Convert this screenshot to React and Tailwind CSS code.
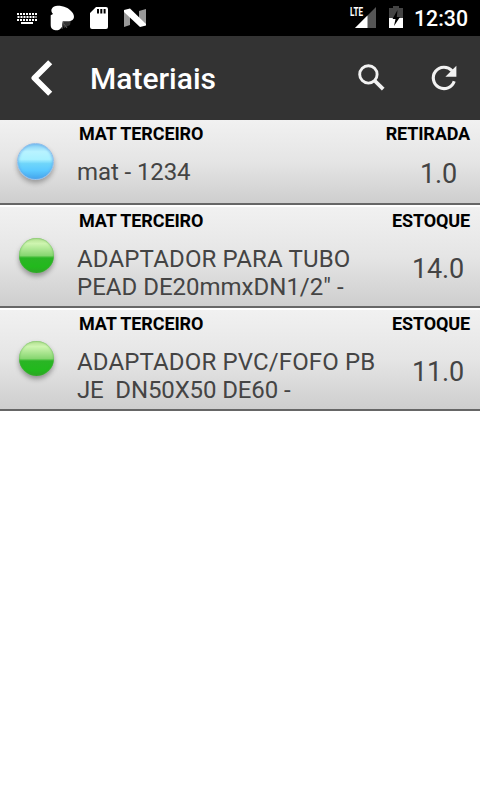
const materials = [
  {
    id: 1,
    owner: "MAT TERCEIRO",
    status: "RETIRADA",
    lines: [{ text: "mat - 1234", tracking: "tracking-[-0.1px]" }],
    amount: "1.0",
  },
  {
    id: 2,
    owner: "MAT TERCEIRO",
    status: "ESTOQUE",
    lines: [
      { text: "ADAPTADOR PARA TUBO", tracking: "tracking-[0.16px]" },
      { text: "PEAD DE20mmxDN1/2\" -", tracking: "tracking-normal" },
    ],
    amount: "14.0",
  },
  {
    id: 3,
    owner: "MAT TERCEIRO",
    status: "ESTOQUE",
    lines: [
      { text: "ADAPTADOR PVC/FOFO PB", tracking: "tracking-[0.14px]" },
      { text: "JE  DN50X50 DE60 -", tracking: "tracking-[-0.12px]" },
    ],
    amount: "11.0",
  },
];

function StatusBar() {
  return (
    <div className="flex h-9 items-center justify-between bg-black pl-4 pr-3">
      <svg width="136" height="36" viewBox="16 0 136 36" fill="#fff">
        <path d="M17 14H37" stroke="#fff" strokeWidth="2" strokeDasharray="2 1" />
        <path d="M17.500 17H36.500" stroke="#fff" strokeWidth="2" strokeDasharray="2 1" />
        <path d="M17 20H37" stroke="#fff" strokeWidth="2" strokeDasharray="2 1" />
        <path d="M21 22h12v2H21z" />
        <path d="M62 21l9-1-1 5-6 3z" fill="#333" />
        <path d="M50.700 15.300L53 14C51 12 51 9.500 52 8.500C53 6.500 55 5.700 57.500 5.700C64 5.700 69 8 72 12C74 14.500 74.500 17 73.500 18.800C72.500 20.700 70 21.300 67 21.300H62.700L62 27C60.500 28.500 60 30 57.700 30.300C56 30.500 54 30.300 52.700 29.300C50.700 28 50.700 26 50.700 24z" />
        <path d="M63.500 22l-1.500 7M64 24l3 4" stroke="#555" strokeWidth="1" />
        <path fillRule="evenodd" d="M96 7h10a2 2 0 0 1 2 2v18a2 2 0 0 1-2 2H92a2 2 0 0 1-2-2V13zM97 9v4.500h2V9zM100.300 9v4.500h2V9zM103.600 9v4.500h2V9z" />
        <path d="M124 11l6 5v9l-6 2zM139 11l7-2v16l-7-5z" fill="#999" />
        <path d="M124 10l6-1.500 16 15.500v1.500l-6 1.500-16-15z" />
      </svg>
      <div className="flex items-center">
        <svg width="60" height="36" viewBox="348 0 60 36" fill="#fff">
          <path d="M376 7v21h-21z" fill="#555" />
          <path d="M367.500 15.500V28H355z" />
          <path d="M349 6h14v11h-14z" fill="#000" />
          <text x="350" y="16" fontFamily="Roboto" fontSize="12" fontWeight="700" textLength="13" lengthAdjust="spacingAndGlyphs">LTE</text>
          <path d="M389 8h4V6h6v2h4v10h-14z" fill="#444" />
          <path d="M389 18h14v10h-14z" />
          <path d="M397.500 10l-5 9h3l-1.500 7 6-9h-3.200z" fill="#000" />
        </svg>
        <span className="ml-[6px] w-[54px] whitespace-nowrap pt-px text-[21.300px] font-medium leading-9 text-white">12:30</span>
      </div>
    </div>
  );
}

function Header() {
  return (
    <header className="flex h-[84px] items-center bg-[#333] pl-[30px] pr-[22px] text-white">
      <svg width="24" height="40" viewBox="30 58 24 40" fill="none">
        <path d="M50.200 62.200L34.400 78l15.800 15.800" stroke="#fff" strokeWidth="5.800" strokeLinejoin="round" />
      </svg>
      <h1 className="ml-9 flex-1 pt-[2px] text-[30px] font-medium leading-9">Materiais</h1>
      <svg width="28" height="28" viewBox="358 64 28 28" fill="none" stroke="#f2f2f2">
        <circle cx="368.400" cy="74.400" r="8.700" strokeWidth="2.900" />
        <path d="M374.500 80.500l8.700 8.700" strokeWidth="3.800" />
      </svg>
      <svg className="ml-[44px]" width="28" height="28" viewBox="430 64 28 28" fill="none">
        <path d="M452 70.800A10.700 10.700 0 1 0 454.200 81.200" stroke="#f2f2f2" strokeWidth="3.100" />
        <path d="M456.400 65.800v11h-11z" fill="#f2f2f2" />
      </svg>
    </header>
  );
}

function Ball({ blue }) {
  return blue ? (
    <div className="mr-px mt-[-1px] size-[37px] rounded-full border border-[#8fbdea] bg-[linear-gradient(#84cdf4_0%,#b8f3ff_22%,#a9f1ff_44%,#6fd5fa_56%,#5ccaff_75%,#43a6ed_100%)] shadow-[0_3px_5px_rgba(0,0,0,0.3),inset_0_0_3px_#5fa4e8]" />
  ) : (
    <div className="mt-[-2px] size-[35px] rounded-full bg-[linear-gradient(#b2df90_0%,#cef5b0_16%,#87d671_50%,#2ab525_57%,#22b91d_82%,#2da526_100%)] shadow-[0_3px_5px_rgba(0,0,0,0.35),inset_0_0_2px_#4ba53f]" />
  );
}

function MaterialRow({ item }) {
  const taken = item.status === "RETIRADA";
  return (
    <li className={`flex border-b-2 border-[#666] bg-[linear-gradient(#f1f1f1_0%,#e5e5e5_50%,#cecece_100%)] pr-[10px] ${taken ? "h-[85px]" : "h-[101px]"}`}>
      <div className="flex w-[72px] shrink-0 items-center justify-center">
        <Ball blue={taken} />
      </div>
      <div className="flex-1 pl-[5px] pt-1">
        <p className="pl-[2px] text-[18px] font-bold leading-5 tracking-[-0.1px] text-black">{item.owner}</p>
        <div className="mt-[14px] text-[24px] leading-7 text-[#444]">
          {item.lines.map((line) => (
            <p key={line.text} className={`whitespace-pre ${line.tracking}`}>{line.text}</p>
          ))}
        </div>
      </div>
      <div className="flex w-[90px] shrink-0 flex-col items-end pt-1">
        <p className="text-[18px] font-bold leading-5 tracking-[-0.15px] text-black">{item.status}</p>
        <p className={`text-[27px] leading-8 tracking-[-0.15px] text-[#444] ${taken ? "mr-[13px] mt-[14px]" : "mr-[6px] mt-[22px]"}`}>{item.amount}</p>
      </div>
    </li>
  );
}

export default function App() {
  return (
    <div className="h-[800px] w-[480px] overflow-hidden bg-white font-[Roboto,sans-serif]">
      <StatusBar />
      <Header />
      <ul className="flex flex-col gap-[2px]">
        {materials.map((item) => (
          <MaterialRow key={item.id} item={item} />
        ))}
      </ul>
    </div>
  );
}
